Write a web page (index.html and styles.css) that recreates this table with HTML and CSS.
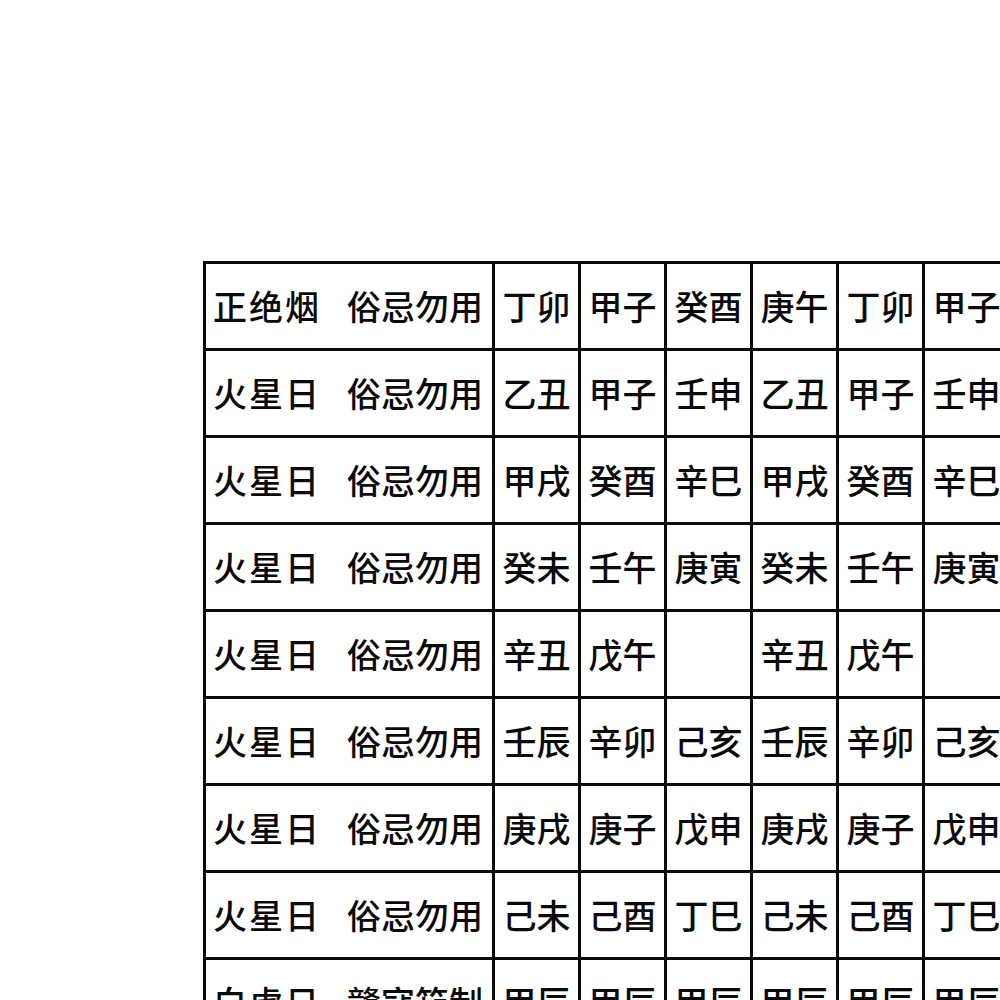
FILE: index.html
```html
<!DOCTYPE html>
<html lang="zh-CN">
<head>
<meta charset="utf-8">
<title>火星日</title>
<link rel="stylesheet" href="styles.css">
</head>
<body>
<div class="page">
<table class="almanac">
<colgroup>
<col class="c-label"><col class="c-day"><col class="c-day"><col class="c-day"><col class="c-day"><col class="c-day"><col class="c-day">
</colgroup>
<tbody>
<tr><td class="label"><div class="pair"><span class="name">正绝烟</span><span>俗忌勿用</span></div></td><td>丁卯</td><td>甲子</td><td>癸酉</td><td>庚午</td><td>丁卯</td><td>甲子</td></tr>
<tr><td class="label"><div class="pair"><span class="name">火星日</span><span>俗忌勿用</span></div></td><td>乙丑</td><td>甲子</td><td>壬申</td><td>乙丑</td><td>甲子</td><td>壬申</td></tr>
<tr><td class="label"><div class="pair"><span class="name">火星日</span><span>俗忌勿用</span></div></td><td>甲戌</td><td>癸酉</td><td>辛巳</td><td>甲戌</td><td>癸酉</td><td>辛巳</td></tr>
<tr><td class="label"><div class="pair"><span class="name">火星日</span><span>俗忌勿用</span></div></td><td>癸未</td><td>壬午</td><td>庚寅</td><td>癸未</td><td>壬午</td><td>庚寅</td></tr>
<tr><td class="label"><div class="pair"><span class="name">火星日</span><span>俗忌勿用</span></div></td><td>辛丑</td><td>戊午</td><td></td><td>辛丑</td><td>戊午</td><td></td></tr>
<tr><td class="label"><div class="pair"><span class="name">火星日</span><span>俗忌勿用</span></div></td><td>壬辰</td><td>辛卯</td><td>己亥</td><td>壬辰</td><td>辛卯</td><td>己亥</td></tr>
<tr><td class="label"><div class="pair"><span class="name">火星日</span><span>俗忌勿用</span></div></td><td>庚戌</td><td>庚子</td><td>戊申</td><td>庚戌</td><td>庚子</td><td>戊申</td></tr>
<tr><td class="label"><div class="pair"><span class="name">火星日</span><span>俗忌勿用</span></div></td><td>己未</td><td>己酉</td><td>丁巳</td><td>己未</td><td>己酉</td><td>丁巳</td></tr>
<tr><td class="label"><div class="pair"><span class="name">白虎日</span><span>赣寇笳制</span></div></td><td>甲辰</td><td>甲辰</td><td>甲辰</td><td>甲辰</td><td>甲辰</td><td>甲辰</td></tr>
</tbody>
</table>
</div>
</body>
</html>
```
FILE: styles.css
```css
html, body {
  margin: 0;
  padding: 0;
  background: #ffffff;
  overflow: hidden;
  width: 1000px;
  height: 1000px;
}
.page {
  padding: 261px 0 0 203px;
  width: 1200px;
}
.almanac {
  border-collapse: collapse;
  table-layout: fixed;
  width: 807px;
  font-family: "Noto Sans CJK SC", "Noto Sans CJK JP", sans-serif;
  font-weight: 500;
  font-size: 34px;
  color: #0a0a0a;
}
.c-label { width: 289px; }
.c-day { width: 86px; }
.almanac td {
  border: 3px solid #0c0c0c;
  height: 84px;
  padding: 0;
  text-align: center;
  vertical-align: middle;
  white-space: nowrap;
  line-height: 1;
  overflow: hidden;
}
.pair {
  display: flex;
  justify-content: space-between;
  padding: 0 9px 0 7px;
}
.name {
  letter-spacing: 2px;
}
```
